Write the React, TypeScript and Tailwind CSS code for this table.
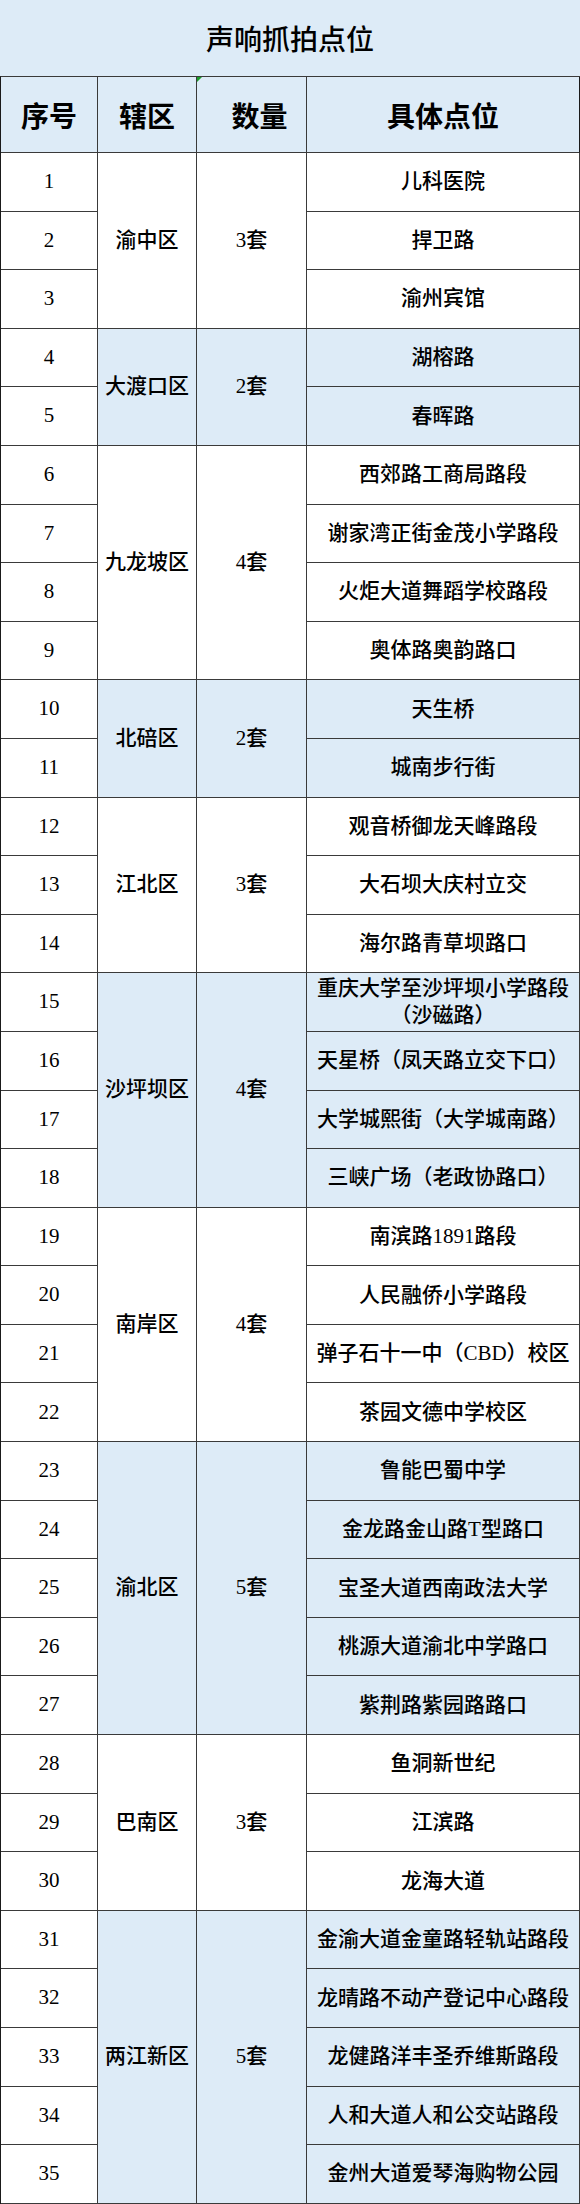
import React from "react";

type Group = { district: string; qty: string; locs: string[] };

const groups: Group[] = [
  { district: "渝中区", qty: "3套", locs: ["儿科医院", "捍卫路", "渝州宾馆"] },
  { district: "大渡口区", qty: "2套", locs: ["湖榕路", "春晖路"] },
  {
    district: "九龙坡区",
    qty: "4套",
    locs: ["西郊路工商局路段", "谢家湾正街金茂小学路段", "火炬大道舞蹈学校路段", "奥体路奥韵路口"],
  },
  { district: "北碚区", qty: "2套", locs: ["天生桥", "城南步行街"] },
  { district: "江北区", qty: "3套", locs: ["观音桥御龙天峰路段", "大石坝大庆村立交", "海尔路青草坝路口"] },
  {
    district: "沙坪坝区",
    qty: "4套",
    locs: ["重庆大学至沙坪坝小学路段（沙磁路）", "天星桥（凤天路立交下口）", "大学城熙街（大学城南路）", "三峡广场（老政协路口）"],
  },
  {
    district: "南岸区",
    qty: "4套",
    locs: ["南滨路1891路段", "人民融侨小学路段", "弹子石十一中（CBD）校区", "茶园文德中学校区"],
  },
  {
    district: "渝北区",
    qty: "5套",
    locs: ["鲁能巴蜀中学", "金龙路金山路T型路口", "宝圣大道西南政法大学", "桃源大道渝北中学路口", "紫荆路紫园路路口"],
  },
  { district: "巴南区", qty: "3套", locs: ["鱼洞新世纪", "江滨路", "龙海大道"] },
  {
    district: "两江新区",
    qty: "5套",
    locs: ["金渝大道金童路轻轨站路段", "龙晴路不动产登记中心路段", "龙健路洋丰圣乔维斯路段", "人和大道人和公交站路段", "金州大道爱琴海购物公园"],
  },
];

const spanClass: Record<number, string> = {
  1: "row-span-1",
  2: "row-span-2",
  3: "row-span-3",
  4: "row-span-4",
  5: "row-span-5",
};

const cell =
  "flex items-center justify-center text-center border-r border-b border-[#3a3a3a] text-black";

export default function App() {
  let n = 0;
  const rows: React.ReactNode[] = [];
  groups.forEach((g, gi) => {
    const blue = gi % 2 === 1;
    const bg = blue ? "bg-[#ddebf7]" : "bg-white";
    g.locs.forEach((loc, li) => {
      n += 1;
      rows.push(
        <div key={`s${n}`} className={`${cell} col-start-1 bg-white text-[21px]`}>
          {n}
        </div>
      );
      if (li === 0) {
        rows.push(
          <div
            key={`d${n}`}
            className={`${cell} col-start-2 ${spanClass[g.locs.length]} ${bg} text-[21px]`}
          >
            {g.district}
          </div>
        );
        rows.push(
          <div
            key={`q${n}`}
            className={`${cell} col-start-3 ${spanClass[g.locs.length]} ${bg} text-[21px]`}
          >
            {g.qty}
          </div>
        );
      }
      rows.push(
        <div
          key={`l${n}`}
          className={`${cell} col-start-4 ${bg} px-[2px] text-[21px] leading-[27px]`}
        >
          {loc}
        </div>
      );
    });
  });

  return (
    <div className="w-[580px] bg-white font-medium font-['Liberation_Serif','Noto_Sans_CJK_SC',serif]">
      <div className="h-[76px] bg-[#ddebf7] flex items-center justify-center text-[28px] text-black font-['Noto_Sans_CJK_SC',sans-serif]">
        声响抓拍点位
      </div>
      <div className="grid grid-cols-[97px_99px_110px_273px] grid-rows-[76px_repeat(35,58.6px)] border-l border-t border-l-[#1a1a1a] border-t-[#3a3a3a]">
        <div className={`${cell} bg-[#ddebf7] text-[28px] font-bold font-['Noto_Sans_CJK_SC',sans-serif]`}>
          序号
        </div>
        <div className={`${cell} bg-[#ddebf7] text-[28px] font-bold font-['Noto_Sans_CJK_SC',sans-serif]`}>
          辖区
        </div>
        <div className={`${cell} relative bg-[#ddebf7] pl-[16px] text-[28px] font-bold font-['Noto_Sans_CJK_SC',sans-serif]`}>
          <span className="absolute left-0 top-0 w-0 h-0 border-t-[5px] border-r-[5px] border-t-[#1a9b2a] border-r-transparent" />
          数量
        </div>
        <div className={`${cell} border-r-[#1a1a1a] bg-[#ddebf7] text-[28px] font-bold font-['Noto_Sans_CJK_SC',sans-serif]`}>
          具体点位
        </div>
        {rows}
      </div>
    </div>
  );
}
